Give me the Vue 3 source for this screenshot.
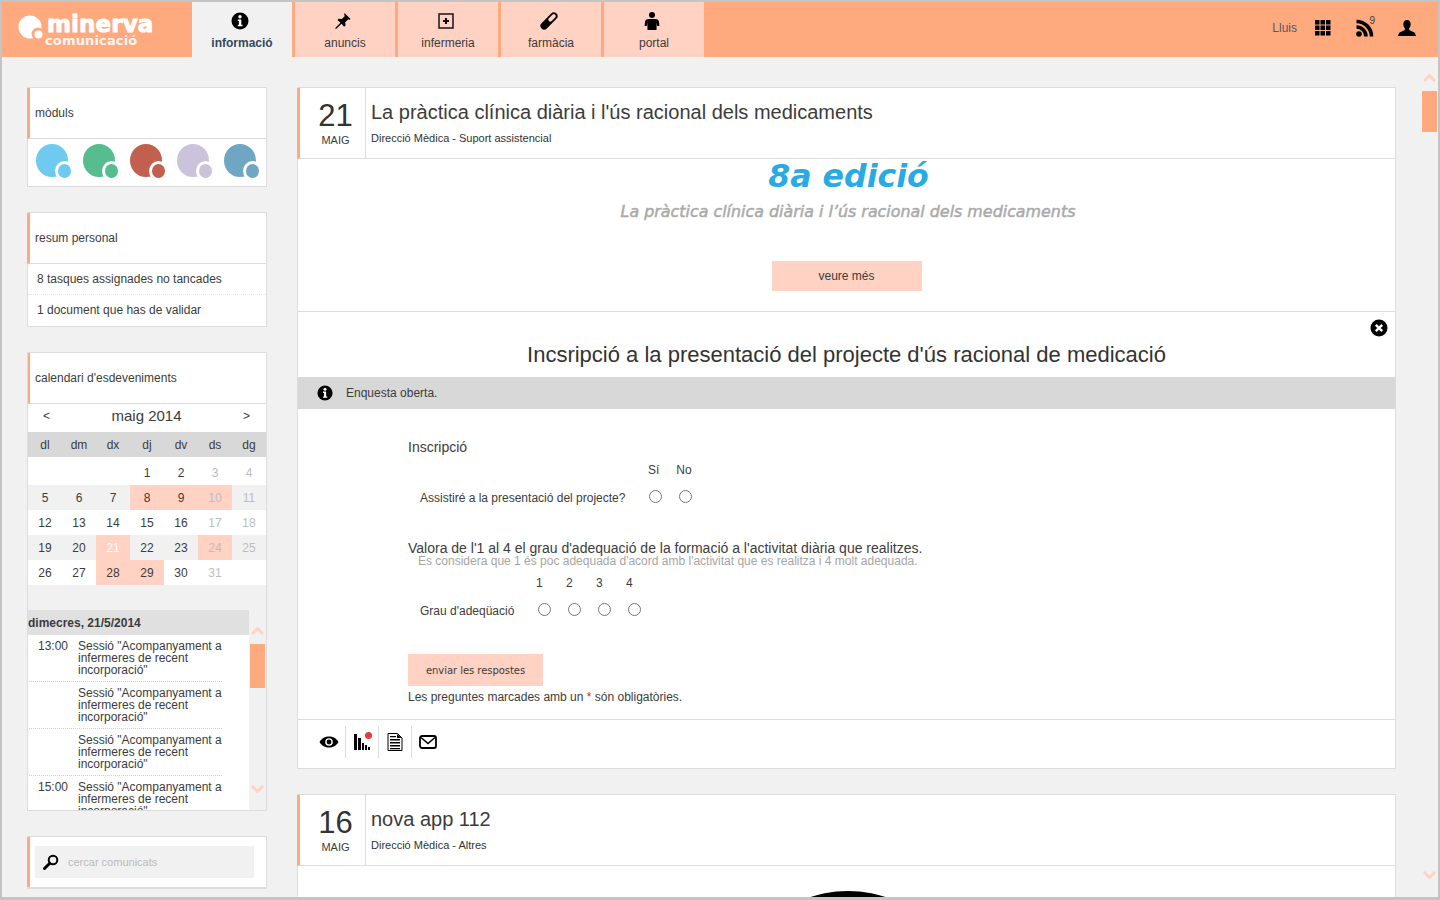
<template>
  <div class="frame">
    <header class="topBar">
      <div class="logo">
        <svg class="logoMark" width="26" height="26" viewBox="0 0 26 26">
          <ellipse cx="12" cy="12" rx="11.5" ry="11.5" fill="#fff" />
          <circle cx="20" cy="19" r="6.5" fill="#ffa97f" />
          <circle cx="20.5" cy="19.5" r="4" fill="#fff" />
        </svg>
        <div class="logoText">
          <div class="logoName">minerva</div>
          <div class="logoSub">comunicació</div>
        </div>
      </div>
      <nav class="tabs">
        <a v-for="tab in tabs" :key="tab.label" class="tab" :class="{ active: tab.active }">
          <svg width="18" height="18" viewBox="0 0 18 18" v-html="tab.icon"></svg>
          <span>{{ tab.label }}</span>
        </a>
      </nav>
      <div class="userBox">
        <span class="userName">Lluis</span>
        <svg class="grid" width="16" height="16" viewBox="0 0 16 16" fill="#000">
          <template v-for="y in [0, 5.5, 11]" :key="y">
            <rect v-for="x in [0, 5.5, 11]" :key="x" :x="x" :y="y" width="4.5" height="4.5" />
          </template>
        </svg>
        <span class="rss">
          <svg width="18" height="18" viewBox="0 0 18 18">
            <circle cx="3" cy="15" r="2.8" fill="#000" />
            <path d="M0.5 8a9.5 9.5 0 0 1 9.5 9.5M0.5 2.500a15 15 0 0 1 15 15" fill="none" stroke="#000" stroke-width="3.600" />
          </svg>
          <i>9</i>
        </span>
        <svg class="person" width="18" height="16" viewBox="0 0 18 16" fill="#000">
          <path d="M9 0c2.4 0 3.7 1.7 3.7 4 0 1.8-.7 3.300-1.600 4.300v1.300c0 .7 1.200 1.200 3 1.800 2.100.7 3.400 1.400 3.900 4.600H0c.5-3.200 1.800-3.900 3.900-4.600 1.800-.6 3-1.100 3-1.800V8.300C6 7.300 5.300 5.800 5.300 4 5.300 1.700 6.600 0 9 0z" />
        </svg>
      </div>
    </header>

    <div class="layout">
      <aside class="sidebar">
        <section class="card modulesCard">
          <div class="cardHead">mòduls</div>
          <div class="modules">
            <span v-for="c in moduleColors" :key="c" class="module" :style="{ background: c }">
              <b :style="{ background: c }"></b>
            </span>
          </div>
        </section>

        <section class="card">
          <div class="cardHead">resum personal</div>
          <div class="summaryRow">8 tasques assignades no tancades</div>
          <div class="summaryRow">1 document que has de validar</div>
        </section>

        <section class="card calendarCard">
          <div class="cardHead">calendari d'esdeveniments</div>
          <div class="monthRow">
            <span>&lt;</span>
            <strong>maig 2014</strong>
            <span>&gt;</span>
          </div>
          <div class="calGrid weekdays">
            <span v-for="d in weekdays" :key="d">{{ d }}</span>
          </div>
          <div v-for="(week, w) in weeks" :key="w" class="calGrid week" :class="{ first: w === 0, odd: w % 2 === 1 }">
            <span
              v-for="(day, i) in week"
              :key="i"
              :class="{ muted: i > 4, marked: marked.includes(day), today: day === 21 }"
            >{{ day }}</span>
          </div>

          <div class="agenda">
            <div class="agendaMain">
              <div class="agendaDay">dimecres, 21/5/2014</div>
              <div class="agendaList">
                <div v-for="(item, i) in agenda" :key="i" class="agendaItem">
                  <span class="agendaTime">{{ item }}</span>
                  <span class="agendaText">Sessió "Acompanyament a infermeres de recent incorporació"</span>
                </div>
              </div>
            </div>
            <div class="agendaScroll">
              <svg class="chev up" width="13" height="10" viewBox="0 0 13 10"><path d="M1 8l5.500-5.500L12 8" /></svg>
              <div class="agendaThumb"></div>
              <svg class="chev down" width="13" height="10" viewBox="0 0 13 10"><path d="M1 2l5.500 5.500L12 2" /></svg>
            </div>
          </div>
        </section>

        <section class="card searchCard">
          <div class="searchInner">
            <div class="searchBox">
              <svg width="16" height="16" viewBox="0 0 16 16">
                <circle cx="10" cy="6" r="4.300" fill="none" stroke="#000" stroke-width="2" />
                <path d="M6.800 9.200L1.500 14.500" stroke="#000" stroke-width="3" stroke-linecap="round" />
              </svg>
              <span>cercar comunicats</span>
            </div>
          </div>
        </section>
      </aside>

      <main class="feed">
        <article class="post">
          <div class="postHead">
            <div class="postDate"><b>21</b><span>MAIG</span></div>
            <div class="postInfo">
              <h2>La pràctica clínica diària i l'ús racional dels medicaments</h2>
              <p>Direcció Mèdica - Suport assistencial</p>
            </div>
          </div>

          <div class="promo">
            <div class="promoTitle">8a edició</div>
            <div class="promoSub">La pràctica clínica diària i l’ús racional dels medicaments</div>
            <a class="pinkBtn moreBtn">veure més</a>
          </div>

          <div class="survey">
            <svg class="closeIcon" width="18" height="18" viewBox="0 0 18 18">
              <circle cx="9" cy="9" r="8.500" fill="#000" />
              <path d="M5.800 5.800l6.400 6.400M12.200 5.800l-6.400 6.400" stroke="#fff" stroke-width="2.400" />
            </svg>
            <h3>Incsripció a la presentació del projecte d'ús racional de medicació</h3>
            <div class="notice">
              <svg width="16" height="16" viewBox="0 0 18 18" v-html="infoIcon"></svg>
              <span>Enquesta oberta.</span>
            </div>

            <form class="surveyForm" @submit.prevent>
              <div class="qTitle">Inscripció</div>
              <div class="optHeads first"><span>Sí</span><span>No</span></div>
              <div class="qRow firstRow">
                <label>Assistiré a la presentació del projecte?</label>
                <div class="radios"><input type="radio" name="a" /><input type="radio" name="a" /></div>
              </div>

              <div class="qTitle second">Valora de l'1 al 4 el grau d'adequació de la formació a l'activitat diària que realitzes.</div>
              <div class="qHint">Es considera que 1 és poc adequada d'acord amb l'activitat que es realitza i 4 molt adequada.</div>
              <div class="optHeads scale"><span v-for="n in 4" :key="n">{{ n }}</span></div>
              <div class="qRow scaleRow">
                <label>Grau d'adeqüació</label>
                <div class="radios"><input v-for="n in 4" :key="n" type="radio" name="b" /></div>
              </div>

              <button class="pinkBtn sendBtn" type="button">enviar les respostes</button>
              <div class="required">Les preguntes marcades amb un <em>*</em> són obligatòries.</div>
            </form>
          </div>

          <div class="postTools">
            <span class="tool">
              <svg width="20" height="12" viewBox="0 0 20 12">
                <path d="M0.500 6C3 2 6 0.500 10 0.500S17 2 19.500 6C17 10 14 11.500 10 11.500S3 10 0.500 6z" fill="#000" />
                <circle cx="10" cy="6" r="3.800" fill="#fff" />
                <circle cx="10" cy="6" r="2.400" fill="#000" />
              </svg>
            </span>
            <span class="tool chartTool">
              <svg width="20" height="20" viewBox="0 0 20 20">
                <path d="M1 2h3v16H1zM5 6h3v12H5zM9 11h2v7H9zM12 13h2v5h-2zM15 15h2v3h-2z" fill="#000" />
                <circle cx="15.500" cy="3.500" r="3.500" fill="#e23c3c" />
              </svg>
            </span>
            <span class="tool">
              <svg width="16" height="18" viewBox="0 0 16 18">
                <path d="M1 .5h9.500L15 5v12.500H1z" fill="#fff" stroke="#000" />
                <path d="M3 3h6v1.200H3zM3 6h10v1.600H3zM3 9h10v1.600H3zM3 12h10v1.600H3zM3 15h10v1.200H3zM10 1v4h4.500" fill="#000" />
              </svg>
            </span>
            <span class="tool mailTool">
              <svg width="18" height="14" viewBox="0 0 18 14">
                <rect x="1" y="1" width="16" height="12" rx="2" fill="#fff" stroke="#000" stroke-width="1.800" />
                <path d="M2 2.500l7 6 7-6" fill="none" stroke="#000" stroke-width="1.600" />
              </svg>
            </span>
          </div>
        </article>

        <article class="post">
          <div class="postHead">
            <div class="postDate"><b>16</b><span>MAIG</span></div>
            <div class="postInfo">
              <h2>nova app 112</h2>
              <p>Direcció Mèdica - Altres</p>
            </div>
          </div>
          <div class="postImage"><div class="blackDisc"></div></div>
        </article>
      </main>
    </div>

    <div class="pageScroll">
      <svg class="chev" width="13" height="10" viewBox="0 0 13 10"><path d="M1 8l5.500-5.500L12 8" /></svg>
      <div class="pageThumb"></div>
      <svg class="chev pageDown" width="13" height="10" viewBox="0 0 13 10"><path d="M1 2l5.500 5.500L12 2" /></svg>
    </div>
  </div>
</template>

<script setup>
const infoIcon = `<circle cx="9" cy="9" r="8.500" fill="#000"/><circle cx="9" cy="4.800" r="1.700" fill="#fff"/><path d="M6.800 7.400h3.500v5.400h1.200v1.500h-4.700v-1.500h1.100V8.900H6.800z" fill="#fff"/>`;

const tabs = [
  { label: "informació", active: true, icon: infoIcon },
  {
    label: "anuncis",
    icon: `<path d="M10.500 1l6 6-1.300 1-1-.7-3 3 .3 3.200-1.300 1.200-2.800-3-4.700 4.800-1.500.5.500-1.500 4.800-4.700-3-2.800 1.200-1.300 3.200.3 3-3-.7-1z" fill="#000"/>`,
  },
  {
    label: "infermeria",
    icon: `<rect x="2" y="2" width="14" height="14" fill="none" stroke="#222" stroke-width="1.600"/><path d="M8 6h2v2h2v2h-2v2H8v-2H6V8h2z" fill="#000"/>`,
  },
  {
    label: "farmàcia",
    icon: `<path d="M4.200 13.800L13.800 4.200" stroke="#000" stroke-width="7.500" stroke-linecap="round"/><path d="M10.300 7.700L13.800 4.200" stroke="#ffd2c3" stroke-width="4" stroke-linecap="round"/>`,
  },
  {
    label: "portal",
    icon: `<circle cx="9" cy="3" r="3" fill="#000"/><path d="M5.500 7h7c2 0 3.300 1.200 3.500 3l.4 4h-2.200l-.5-3.500-.2 7.500H4.500l-.2-7.500-.5 3.500H1.600l.4-4c.2-1.800 1.500-3 3.500-3z" fill="#000"/>`,
  },
];

const moduleColors = ["#6ecbef", "#55bd8e", "#c25f4e", "#cbc3dc", "#6fa6c4"];

const weekdays = ["dl", "dm", "dx", "dj", "dv", "ds", "dg"];
const weeks = [
  ["", "", "", 1, 2, 3, 4],
  [5, 6, 7, 8, 9, 10, 11],
  [12, 13, 14, 15, 16, 17, 18],
  [19, 20, 21, 22, 23, 24, 25],
  [26, 27, 28, 29, 30, 31, ""],
];
const marked = [8, 9, 10, 21, 24, 28, 29];

const agenda = ["13:00", "", "", "15:00"];
</script>

<style>
html, body {
  margin: 0;
  overflow: hidden;
}
</style>

<style scoped>
.frame {
  position: relative;
  box-sizing: border-box;
  width: 1440px;
  height: 900px;
  overflow: hidden;
  border: 2px solid #c4c4c4;
  border-bottom-width: 3px;
  background: #f1f1f1;
  font-family: "Liberation Sans", Arial, sans-serif;
  font-size: 12px;
  color: #3c3c3c;
}

/* Top bar */
.topBar {
  display: flex;
  height: 55px;
  background: #ffa97f;
}

.logo {
  display: flex;
  width: 190px;
  box-sizing: border-box;
  padding: 13px 0 0 16px;
  color: #fff;
}

.logoMark {
  flex-shrink: 0;
}

.logoText {
  margin-left: 1px;
}

.logoName {
  margin-top: -1px;
  padding-left: 2px;
  font-family: "DejaVu Sans", sans-serif;
  font-size: 23px;
  font-weight: 700;
  line-height: 20px;
  letter-spacing: .1px;
  -webkit-text-stroke: .9px #fff;
}

.logoSub {
  font-family: "DejaVu Sans", sans-serif;
  font-size: 13px;
  font-weight: 700;
  line-height: 13px;
  letter-spacing: .15px;
  opacity: .9;
}

.tabs {
  display: flex;
  gap: 3px;
}

.tab {
  display: flex;
  flex-direction: column;
  align-items: center;
  width: 100px;
  padding-top: 10px;
  box-sizing: border-box;
  background: #ffd2c3;
}

.tab svg {
  margin-right: 4px;
}

.tab span {
  margin-top: 6px;
  line-height: 14px;
}

.tab.active {
  background: #f1f1f1;
  font-weight: 700;
  color: #34495e;
}

.userBox {
  display: flex;
  align-items: center;
  margin-left: auto;
  padding: 0 22px 3px 0;
}

.userName {
  color: #4f5b66;
}

.grid {
  margin-left: 18px;
}

.rss {
  position: relative;
  display: flex;
  margin-left: 25px;
}

.rss i {
  position: absolute;
  top: -3px;
  right: -1px;
  font-size: 10px;
  font-style: normal;
  line-height: 10px;
}

.person {
  margin-left: 24px;
}

/* Columns */
.layout {
  display: flex;
  align-items: flex-start;
  gap: 30px;
  padding: 30px 0 0 25px;
}

.sidebar {
  display: flex;
  flex-direction: column;
  gap: 25px;
  width: 240px;
  flex-shrink: 0;
}

.card {
  box-sizing: border-box;
  border: 1px solid #dcdcdc;
  background: #fff;
}

.cardHead {
  display: flex;
  align-items: center;
  height: 50px;
  margin-left: -1px;
  padding-left: 5px;
  border-left: 3px solid #ffa97f;
  border-bottom: 1px solid #dcdcdc;
}

.modules {
  display: flex;
  gap: 15px;
  height: 47px;
  padding: 5px 0 0 8px;
  box-sizing: border-box;
}

.module {
  position: relative;
  width: 32px;
  height: 33px;
  border-radius: 50%;
}

.module b {
  position: absolute;
  right: -3px;
  bottom: -1px;
  width: 13px;
  height: 14px;
  border-radius: 50%;
  box-shadow: 0 0 0 3px #fff;
}

.summaryRow {
  display: flex;
  align-items: center;
  height: 30px;
  padding-left: 9px;
}

.summaryRow + .summaryRow {
  box-sizing: border-box;
  height: 32px;
  padding-bottom: 2px;
  border-top: 1px dotted #e0e0e0;
}

/* Calendar */
.calendarCard {
  height: 459px;
  overflow: hidden;
  background: #f1f1f1;
}

.calendarCard .cardHead {
  background: #fff;
}

.monthRow {
  display: flex;
  align-items: center;
  justify-content: space-between;
  box-sizing: border-box;
  height: 28px;
  padding: 0 16px 5px 15px;
  background: #fff;
  font-size: 14px;
}

.monthRow strong {
  font-size: 15px;
  font-weight: 400;
}

.monthRow span {
  font-size: 12px;
}

.calGrid {
  display: grid;
  grid-template-columns: repeat(7, 34px);
  height: 25px;
  background: #fff;
  color: #3c3c3c;
}

.calGrid span {
  display: flex;
  align-items: center;
  justify-content: center;
}

.weekdays {
  background: #d8d8d8;
}

.week.first {
  height: 28px;
}

.week.first span {
  padding-top: 3px;
}

.week.odd {
  background: #f1f1f1;
}

.week .muted {
  color: #bdbdbd;
}

.week .marked {
  background: #ffd2c3;
}

.week .today {
  color: #fff;
}

.agenda {
  display: flex;
  margin-top: 25px;
  height: 201px;
}

.agendaMain {
  width: 221px;
  overflow: hidden;
}

.agendaDay {
  box-sizing: border-box;
  height: 25px;
  padding-top: 1px;
  line-height: 25px;
  background: #e0e0e0;
  font-weight: 700;
}

.agendaList {
  height: 176px;
  overflow: hidden;
  background: #fff;
  padding-left: 1px;
}

.agendaItem {
  display: flex;
  width: 193px;
  box-sizing: border-box;
  height: 47px;
  padding-top: 5px;
  line-height: 12px;
  border-bottom: 1px dotted #d0d0d0;
}

.agendaItem:last-child {
  border-bottom: 0;
}

.agendaTime {
  flex: 0 0 49px;
  text-align: right;
  padding-right: 10px;
  box-sizing: border-box;
}

.agendaText {
  flex: 1;
}

.agendaScroll {
  display: flex;
  flex-direction: column;
  align-items: center;
  width: 15px;
  margin-left: 1px;
}

.agendaScroll .up {
  margin-top: 16px;
}

.agendaThumb {
  width: 15px;
  height: 44px;
  margin-top: 8px;
  background: #ffa97f;
}

.agendaScroll .down {
  margin-top: 96px;
}

.chev {
  display: block;
  flex-shrink: 0;
  fill: none;
  stroke: #ffd2c3;
  stroke-width: 3;
}

/* Search */
.searchCard {
  height: 53px;
  border-bottom-width: 2px;
}

.searchInner {
  height: 100%;
  margin-left: -1px;
  padding: 9px 12px 0 5px;
  box-sizing: border-box;
  border-left: 3px solid #ffa97f;
}

.searchBox {
  display: flex;
  align-items: center;
  gap: 9px;
  height: 32px;
  padding-left: 8px;
  background: #f1f1f1;
  font-size: 11px;
  color: #bbb;
}

/* Posts */
.feed {
  display: flex;
  flex-direction: column;
  gap: 25px;
  width: 1099px;
  flex-shrink: 0;
}

.post {
  box-sizing: border-box;
  border: 1px solid #dcdcdc;
  background: #fff;
}

.postHead {
  display: flex;
  height: 70px;
  margin-left: -1px;
  border-left: 3px solid #ffa97f;
  border-bottom: 1px solid #dcdcdc;
}

.postDate {
  display: flex;
  flex-direction: column;
  align-items: center;
  box-sizing: border-box;
  width: 66px;
  padding-left: 6px;
  flex-shrink: 0;
  border-right: 1px solid #dcdcdc;
}

.postDate b {
  margin-top: 10px;
  font-size: 31px;
  font-weight: 400;
  line-height: 36px;
  color: #333;
}

.postDate span {
  margin-top: -1px;
  font-size: 11px;
  line-height: 14px;
}

.postInfo {
  padding-left: 5px;
}

.postInfo h2 {
  margin: 12px 0 0;
  font-size: 20px;
  font-weight: 400;
  line-height: 24px;
}

.postInfo p {
  margin: 7px 0 0;
  font-size: 11px;
  line-height: 14px;
  color: #333;
}

.promo {
  display: flex;
  flex-direction: column;
  align-items: center;
  height: 153px;
  box-sizing: border-box;
  border-bottom: 1px solid #dcdcdc;
}

.promoTitle {
  margin-top: -1px;
  padding-left: 4px;
  font-family: "DejaVu Sans", sans-serif;
  font-size: 31.600px;
  font-weight: 700;
  font-style: oblique;
  line-height: 36px;
  color: #29abe2;
}

.promoSub {
  margin-top: 8px;
  padding-left: 3px;
  font-family: "DejaVu Sans", sans-serif;
  font-size: 15.900px;
  font-style: oblique;
  line-height: 20px;
  -webkit-text-stroke: .5px #aaa;
  color: #aaa;
}

.pinkBtn {
  display: flex;
  align-items: center;
  justify-content: center;
  border: 0;
  padding: 0;
  background: #ffd2c3;
  color: #3c3c3c;
  font-family: inherit;
  font-size: 12px;
}

.moreBtn {
  width: 150px;
  height: 30px;
  margin-top: 39px;
}

.survey {
  position: relative;
  height: 408px;
  box-sizing: border-box;
  border-bottom: 1px solid #dcdcdc;
}

.closeIcon {
  position: absolute;
  top: 7px;
  right: 7px;
}

.survey h3 {
  margin: 0;
  padding-top: 30px;
  font-size: 22px;
  font-weight: 400;
  line-height: 26px;
  text-align: center;
  color: #333;
}

.notice {
  display: flex;
  align-items: center;
  gap: 13px;
  height: 32px;
  margin-top: 9px;
  padding-left: 19px;
  background: #d8d8d8;
}

.surveyForm {
  padding: 30px 0 0 110px;
}

.qTitle {
  font-size: 14px;
  line-height: 16px;
}

.optHeads {
  display: flex;
  line-height: 14px;
}

.optHeads.first {
  margin-top: 8px;
  padding-left: 240px;
  gap: 17px;
}

.optHeads.scale {
  margin-top: 9px;
  padding-left: 128px;
}

.optHeads.scale span {
  width: 30px;
}

.qRow {
  display: flex;
  align-items: center;
  height: 26px;
  margin-top: 7px;
  padding-left: 12px;
}

.qRow label {
  width: 229px;
  padding-top: 2px;
}

.firstRow .radios {
  margin-top: -1px;
}

.radios {
  display: flex;
  gap: 17px;
}

.radios input {
  width: 13px;
  height: 13px;
  margin: 0;
  flex-shrink: 0;
}

.scaleRow {
  margin-top: 6px;
}

.scaleRow label {
  width: 118px;
  padding-top: 4px;
}

.qTitle.second {
  margin-top: 30px;
}

.qHint {
  margin-top: -1px;
  padding-left: 10px;
  line-height: 12px;
  color: #a5a5a5;
}

.sendBtn {
  width: 135px;
  height: 32px;
  margin-top: 32px;
  font-family: "DejaVu Sans", sans-serif;
  font-size: 10px;
  letter-spacing: -.05px;
}

.required {
  margin-top: 4px;
  line-height: 14px;
}

.required em {
  font-style: normal;
  color: #e02020;
}

.postTools {
  display: flex;
  height: 48px;
  padding: 6px 0 0 15px;
  box-sizing: border-box;
}

.tool {
  display: flex;
  align-items: center;
  justify-content: center;
  width: 33px;
  height: 32px;
  border-right: 1px solid #dcdcdc;
  box-sizing: border-box;
}

.tool:last-child {
  border-right: 0;
}

.chartTool svg {
  margin-left: 2px;
}

.mailTool svg {
  margin-right: 1px;
}

.postImage {
  height: 40px;
  overflow: hidden;
}

.blackDisc {
  width: 240px;
  height: 240px;
  margin: 25px 0 0 430px;
  border-radius: 50%;
  background: #000;
}

/* Page scroller drawn over the right edge */
.pageScroll {
  position: absolute;
  top: 71px;
  right: 1px;
  display: flex;
  flex-direction: column;
  align-items: center;
  width: 15px;
  height: 807px;
}

.pageThumb {
  width: 15px;
  height: 41px;
  margin-top: 8px;
  background: #ffa97f;
}

.pageDown {
  margin-top: auto;
}
</style>
